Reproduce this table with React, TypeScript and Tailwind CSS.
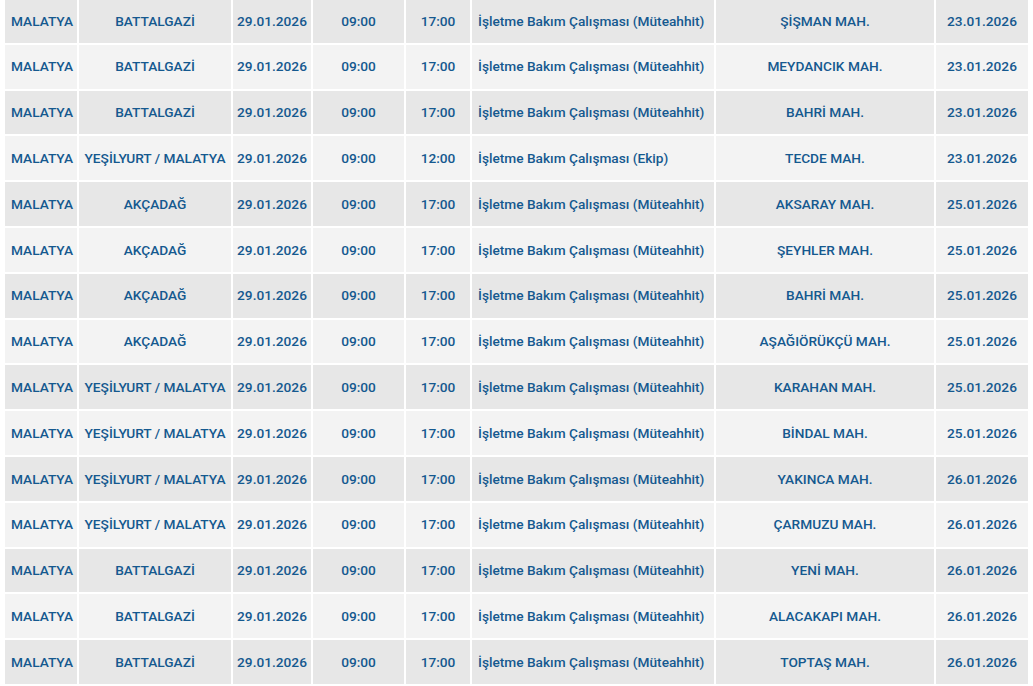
const rows = [
  ["BATTALGAZİ", "09:00", "17:00", "İşletme Bakım Çalışması (Müteahhit)", "ŞİŞMAN MAH.", "23.01.2026"],
  ["BATTALGAZİ", "09:00", "17:00", "İşletme Bakım Çalışması (Müteahhit)", "MEYDANCIK MAH.", "23.01.2026"],
  ["BATTALGAZİ", "09:00", "17:00", "İşletme Bakım Çalışması (Müteahhit)", "BAHRİ MAH.", "23.01.2026"],
  ["YEŞİLYURT / MALATYA", "09:00", "12:00", "İşletme Bakım Çalışması (Ekip)", "TECDE MAH.", "23.01.2026"],
  ["AKÇADAĞ", "09:00", "17:00", "İşletme Bakım Çalışması (Müteahhit)", "AKSARAY MAH.", "25.01.2026"],
  ["AKÇADAĞ", "09:00", "17:00", "İşletme Bakım Çalışması (Müteahhit)", "ŞEYHLER MAH.", "25.01.2026"],
  ["AKÇADAĞ", "09:00", "17:00", "İşletme Bakım Çalışması (Müteahhit)", "BAHRİ MAH.", "25.01.2026"],
  ["AKÇADAĞ", "09:00", "17:00", "İşletme Bakım Çalışması (Müteahhit)", "AŞAĞIÖRÜKÇÜ MAH.", "25.01.2026"],
  ["YEŞİLYURT / MALATYA", "09:00", "17:00", "İşletme Bakım Çalışması (Müteahhit)", "KARAHAN MAH.", "25.01.2026"],
  ["YEŞİLYURT / MALATYA", "09:00", "17:00", "İşletme Bakım Çalışması (Müteahhit)", "BİNDAL MAH.", "25.01.2026"],
  ["YEŞİLYURT / MALATYA", "09:00", "17:00", "İşletme Bakım Çalışması (Müteahhit)", "YAKINCA MAH.", "26.01.2026"],
  ["YEŞİLYURT / MALATYA", "09:00", "17:00", "İşletme Bakım Çalışması (Müteahhit)", "ÇARMUZU MAH.", "26.01.2026"],
  ["BATTALGAZİ", "09:00", "17:00", "İşletme Bakım Çalışması (Müteahhit)", "YENİ MAH.", "26.01.2026"],
  ["BATTALGAZİ", "09:00", "17:00", "İşletme Bakım Çalışması (Müteahhit)", "ALACAKAPI MAH.", "26.01.2026"],
  ["BATTALGAZİ", "09:00", "17:00", "İşletme Bakım Çalışması (Müteahhit)", "TOPTAŞ MAH.", "26.01.2026"],
];

export default function App() {
  return (
    <div className="bg-white w-[1033px] h-[686px] overflow-hidden pl-[5px] pr-[5px]">
      <div
        className="-mt-[1px] flex flex-col gap-[2px] text-[13.7px] font-medium text-[#15598f]"
        style={{ fontFamily: "Roboto, 'Noto Sans', sans-serif" }}
      >
        {rows.map(([ilce, start, end, desc, mah, date], i) => (
          <div
            key={i}
            className="grid grid-cols-[72px_152px_78px_91px_64px_242px_218px_1fr] gap-[2px] h-[43.8px]"
          >
            {[
              { t: "MALATYA", left: true },
              { t: ilce },
              { t: "29.01.2026" },
              { t: start },
              { t: end },
              { t: desc, left: true },
              { t: mah },
              { t: date },
            ].map((c, j) => (
              <div
                key={j}
                className={`flex items-center whitespace-nowrap ${c.left ? "justify-start pl-[6px]" : "justify-center"} ${i % 2 === 0 ? "bg-[#e7e7e7]" : "bg-[#f3f3f3]"}`}
              >
                {c.t}
              </div>
            ))}
          </div>
        ))}
      </div>
    </div>
  );
}
